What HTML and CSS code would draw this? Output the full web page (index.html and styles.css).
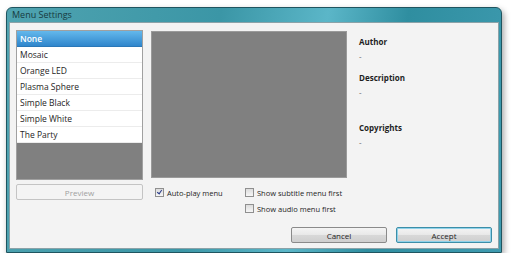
FILE: index.html
```html
<!DOCTYPE html>
<html lang="en">
<head>
    <meta charset="UTF-8">
    <title>Menu Settings</title>
    <link rel="stylesheet" href="styles.css">
</head>
<body>
    <div class="window">
        <div class="titlebar">Menu Settings</div>
        <div class="client">
            <div class="main">
                <div class="left-col">
                    <ul class="menu-list">
                        <li class="selected">None</li>
                        <li>Mosaic</li>
                        <li>Orange LED</li>
                        <li>Plasma Sphere</li>
                        <li>Simple Black</li>
                        <li>Simple White</li>
                        <li>The Party</li>
                    </ul>
                    <button class="btn btn-disabled">Preview</button>
                </div>
                <div class="mid-col">
                    <div class="preview"></div>
                    <div class="options">
                        <label class="check"><span class="box checked"></span>Auto-play menu</label>
                        <label class="check"><span class="box"></span>Show subtitle menu first</label>
                        <span></span>
                        <label class="check"><span class="box"></span>Show audio menu first</label>
                    </div>
                </div>
                <div class="info">
                    <div class="info-item">
                        <div class="info-title">Author</div>
                        <div class="info-value">-</div>
                    </div>
                    <div class="info-item">
                        <div class="info-title">Description</div>
                        <div class="info-value">-</div>
                    </div>
                    <div class="info-item">
                        <div class="info-title">Copyrights</div>
                        <div class="info-value">-</div>
                    </div>
                </div>
            </div>
            <div class="actions">
                <button class="btn">Cancel</button>
                <button class="btn btn-default">Accept</button>
            </div>
        </div>
    </div>
</body>
</html>
```

FILE: styles.css
```css
body {
    margin: 0;
    background: #ffffff;
    font-family: "Open Sans", "DejaVu Sans", sans-serif;
    font-size: 8px;
    color: #1e1e1e;
}

.window {
    margin: 7px 0 0 6px;
    width: 494px;
    height: 244px;
    border: 1px solid #1f5560;
    border-radius: 6px 6px 0 0;
    background: linear-gradient(100deg, #4fa3b0 0%, #3b96a6 40%, #5bb6c8 60%, #2f8ea0 75%, #3f9bb0 100%);
    box-shadow: 2px 3px 6px rgba(0, 0, 0, 0.35);
    display: flex;
    flex-direction: column;
}

.titlebar {
    height: 14px;
    line-height: 14px;
    padding-left: 5px;
    font-size: 9px;
    color: #173a40;
}

.client {
    flex: 1;
    margin: 0 2px 3px 2px;
    background: #f3f3f3;
    border: 1px solid #8ba2a8;
    padding: 7px 6px 0 6px;
    display: flex;
    flex-direction: column;
}

.main {
    display: flex;
}

.left-col {
    width: 127px;
    display: flex;
    flex-direction: column;
}

.menu-list {
    list-style: none;
    margin: 0;
    padding: 0;
    height: 148px;
    background: #808080;
    border: 1px solid #a0a0a0;
}

.menu-list li {
    height: 15px;
    line-height: 15px;
    padding-left: 3px;
    background: #ffffff;
    border-bottom: 1px solid #ececec;
    font-size: 8.5px;
}

.menu-list li.selected {
    background: linear-gradient(#64b8ec, #2f86cc);
    color: #ffffff;
    font-weight: 600;
    border-bottom-color: #2a78b8;
}

.btn {
    font-family: inherit;
    font-size: 8px;
    color: #1e1e1e;
    height: 16px;
    padding: 0;
    border: 1px solid #8a8a8a;
    border-radius: 2px;
    background: linear-gradient(#f4f4f4 0%, #e8e8e8 50%, #d8d8d8 51%, #cfcfcf 100%);
}

.btn-disabled {
    margin-top: 4px;
    width: 127px;
    color: #a0a0a0;
    background: #f4f4f4;
    border-color: #c4c4c4;
}

.mid-col {
    margin-left: 8px;
    width: 196px;
}

.preview {
    height: 147px;
    margin-top: 1px;
    background: #808080;
    border: 1px solid #9a9a9a;
    box-sizing: border-box;
}

.options {
    display: grid;
    grid-template-columns: 90px auto;
    row-gap: 5px;
    margin-top: 9px;
    padding-left: 4px;
}

.check {
    display: flex;
    align-items: center;
    height: 11px;
    font-size: 7.5px;
    white-space: nowrap;
}

.box {
    width: 7px;
    height: 7px;
    border: 1px solid #8f8f8f;
    background: linear-gradient(#dcdcdc, #f6f6f6);
    margin-right: 3px;
    position: relative;
}

.box.checked::after {
    content: "";
    position: absolute;
    left: 2px;
    top: 0px;
    width: 2px;
    height: 4px;
    border: solid #2a3c8a;
    border-width: 0 1.5px 1.5px 0;
    transform: rotate(35deg);
}

.info {
    margin-left: 12px;
    padding-top: 6px;
}

.info-item {
    height: 36px;
}

.info-item:nth-child(2) {
    height: 50px;
}

.info-title {
    font-weight: bold;
    font-size: 8px;
    line-height: 12px;
}

.info-value {
    margin-top: 2px;
    font-size: 8px;
    color: #555;
}

.actions {
    display: flex;
    justify-content: flex-end;
    gap: 9px;
    margin-top: auto;
    margin-bottom: 5px;
}

.actions .btn {
    width: 96px;
}

.btn-default {
    border-color: #3c8ea8;
    box-shadow: inset 0 0 0 1px #8fd2ea;
}
```
